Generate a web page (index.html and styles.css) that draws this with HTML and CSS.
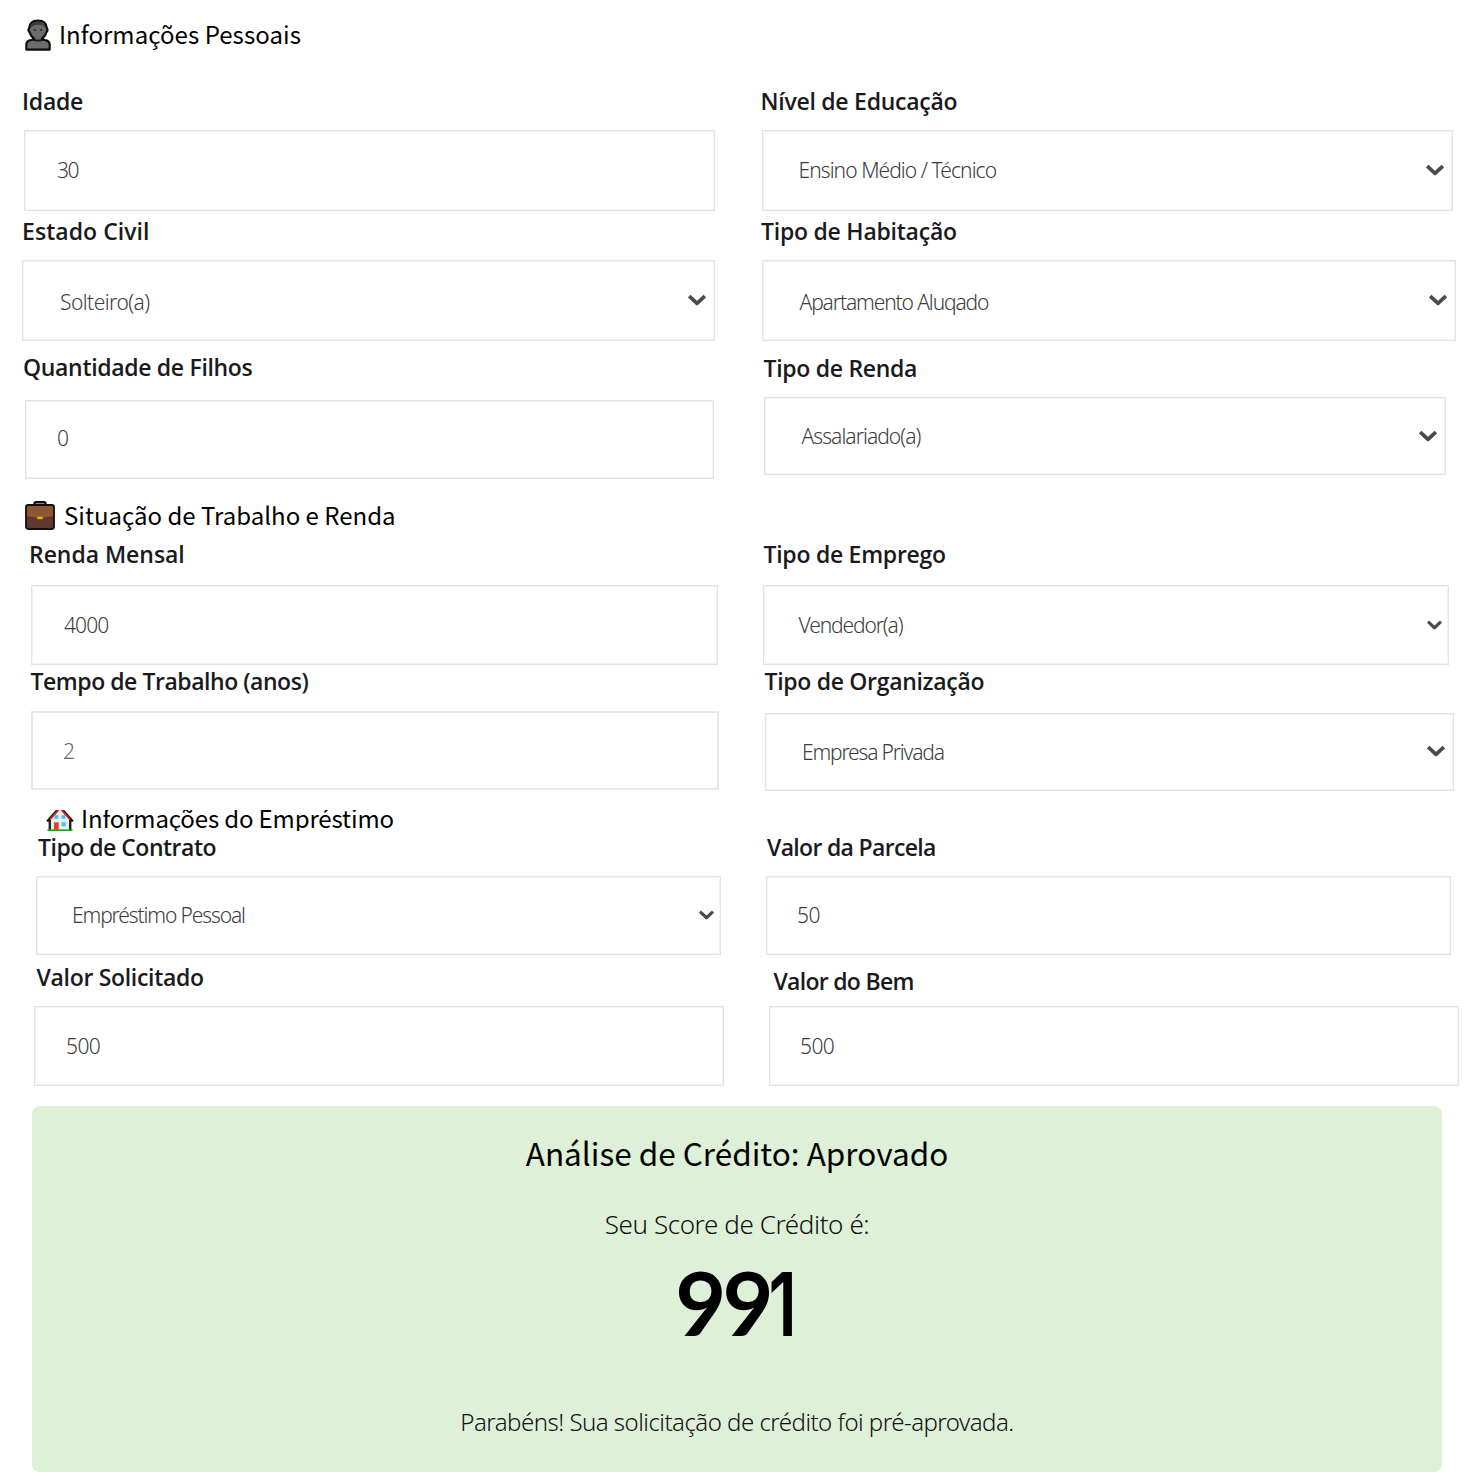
FILE: index.html
```html
<!DOCTYPE html>
<html lang="pt-BR">
<head>
<meta charset="utf-8">
<title>Análise de Crédito</title>
<link rel="stylesheet" href="styles.css">
</head>
<body>
<svg width="0" height="0" class="defs" aria-hidden="true">
  <symbol id="chev" viewBox="0 0 18 12"><path d="M1.200 2 9 9.300l7.800-7.300" fill="none" stroke="#4a4a4a" stroke-width="3.700" stroke-linecap="butt" stroke-linejoin="round"/></symbol>
</svg>
<main class="page">
  <h2 class="heading heading-person">
    <svg class="ico-person" viewBox="0 0 26 32"><path d="M1.300 30.600V26q0-4.500 5-5L9.300 19.800Q5.500 17 4.800 13.500 2.600 11.500 4 9.300 4.700 1.500 13 1.500T22 9.300q1.400 2.200-.8 4.200-.7 3.500-4.500 6.300l3 1.200q5 .5 5 5v4.600z" fill="#6c6c6c" stroke="#0c0c0c" stroke-width="2.100" stroke-linejoin="round"/><path d="M5.300 9.500Q6 2.500 13 2.500t7.700 7L18 6.500Q11 5 8 7z" fill="#3d3d3d"/><path d="M7.500 20.600q5.500 2 11 0" fill="none" stroke="#161616" stroke-width="1.700"/><circle cx="9.800" cy="11" r="1" fill="#222"/><circle cx="16.200" cy="11" r="1" fill="#222"/></svg>
    <span>Informações Pessoais</span>
  </h2>
  <section class="columns personal">
    <div class="col">
      <div class="field age"><label>Idade</label><div class="control"><span>30</span></div></div>
      <div class="field civil"><label>Estado Civil</label><div class="control select"><span>Solteiro(a)</span><svg class="chev"><use href="#chev"/></svg></div></div>
      <div class="field kids"><label>Quantidade de Filhos</label><div class="control"><span>0</span></div></div>
    </div>
    <div class="col">
      <div class="field school"><label>Nível de Educação</label><div class="control select"><span>Ensino Médio / Técnico</span><svg class="chev"><use href="#chev"/></svg></div></div>
      <div class="field housing"><label>Tipo de Habitação</label><div class="control select"><span>Apartamento Aluqado</span><svg class="chev"><use href="#chev"/></svg></div></div>
      <div class="field income-type"><label>Tipo de Renda</label><div class="control select"><span>Assalariado(a)</span><svg class="chev"><use href="#chev"/></svg></div></div>
    </div>
  </section>
  <h2 class="heading heading-work">
    <svg class="ico-case" viewBox="0 0 30 29"><path d="M9.500 5V2.700Q9.500 1.300 11 1.300h8q1.500 0 1.500 1.400V5" fill="none" stroke="#17100e" stroke-width="2.400"/><rect x="1" y="4" width="28" height="24" rx="2.200" fill="#5d392d" stroke="#140d0b" stroke-width="1.800"/><path d="M2 6.500Q2 5 3.500 5h23Q28 5 28 6.500V15q-13 3.500-26 0z" fill="#8c5630"/><rect x="12.300" y="15.600" width="5.400" height="2.600" fill="#e9ad12"/></svg>
    <span>Situação de Trabalho e Renda</span>
  </h2>
  <section class="columns work">
    <div class="col">
      <div class="field income"><label>Renda Mensal</label><div class="control"><span>4000</span></div></div>
      <div class="field tenure"><label>Tempo de Trabalho (anos)</label><div class="control"><span>2</span></div></div>
    </div>
    <div class="col">
      <div class="field job"><label>Tipo de Emprego</label><div class="control select"><span>Vendedor(a)</span><svg class="chev small"><use href="#chev"/></svg></div></div>
      <div class="field org"><label>Tipo de Organização</label><div class="control select"><span>Empresa Privada</span><svg class="chev"><use href="#chev"/></svg></div></div>
    </div>
  </section>
  <h2 class="heading heading-loan">
    <svg class="ico-house" viewBox="0 0 28 21"><path d="M4 9 11 0h6l7 9v11H4z" fill="#e9eef0"/><path d="M1.200 11.500 11.500 0M26.800 11.500 16.500 0" fill="none" stroke="#1a1010" stroke-width="2.600"/><path d="M4 9.500 12.500 0M24 9.500 15.500 0" fill="none" stroke="#e0291c" stroke-width="1.700"/><path d="M3.800 10v10M24.200 10v10" stroke="#222" stroke-width="2.400"/><path d="M8.500 5.300h3.700v3.500H8.500zM15.500 5.300h3.700v3.500h-3.700zM15.500 12.300h4.200v4h-4.200z" fill="#35c8f5"/><path d="M8 12.300h4.700v7.500H8z" fill="#ef3b24"/><path d="M1.500 20.300h25" stroke="#16a51c" stroke-width="1.800"/></svg>
    <span>Informações do Empréstimo</span>
  </h2>
  <section class="columns loan">
    <div class="col">
      <div class="field contract"><label>Tipo de Contrato</label><div class="control select"><span>Empréstimo Pessoal</span><svg class="chev small"><use href="#chev"/></svg></div></div>
      <div class="field amount"><label>Valor Solicitado</label><div class="control"><span>500</span></div></div>
    </div>
    <div class="col">
      <div class="field installment"><label>Valor da Parcela</label><div class="control"><span>50</span></div></div>
      <div class="field asset"><label>Valor do Bem</label><div class="control"><span>500</span></div></div>
    </div>
  </section>
  <section class="result">
    <h1>Análise de Crédito: Aprovado</h1>
    <p class="lead">Seu Score de Crédito é:</p>
    <p class="score">99<span>1</span></p>
    <p class="note">Parabéns! Sua solicitação de crédito foi pré-aprovada.</p>
  </section>
</main>
</body>
</html>
```

FILE: styles.css
```css
* { box-sizing: border-box; }
body { margin: 0; background: #fff; color: #000; font-family: "Open Sans", "Noto Sans", sans-serif; }
h1, h2, p { margin: 0; font-weight: 400; }
.defs { display: block; }
.page { width: 1477px; height: 1480px; overflow: hidden; }

/* Section headings */
.heading { display: flex; align-items: flex-start; font: 400 24px/32px "Noto Sans CJK SC", sans-serif; white-space: nowrap; }
.heading svg { flex: none; }
.heading-person { height: 86px; padding: 18px 0 0 25px; letter-spacing: .06px; }
.ico-person { width: 26px; height: 32px; margin: 1px 8px 0 0; }
.heading-work { height: 39px; padding-left: 25px; }
.ico-case { width: 30px; height: 29px; margin: 1px 9px 0 0; }
.heading-work span { margin-top: -1px; }
.heading-loan { height: 21px; padding-left: 46px; margin-top: 8px; overflow: hidden; letter-spacing: -.14px; }
.ico-house { width: 28px; height: 21px; margin-right: 7px; }
.heading-loan span { margin-top: -8px; }

/* Form columns */
.columns { display: grid; grid-template-columns: 740px 737px; }
.personal { height: 414px; }
.work { height: 263px; }
.loan { height: 256px; margin-top: 1px; }
.field { padding-top: var(--before, 0px); }
.field label { display: block; height: 32px; line-height: 30px; margin-left: var(--lx); font-size: 23px; font-weight: 600; color: #1a1a1c; letter-spacing: var(--ls); white-space: nowrap; }
.control { display: flex; align-items: center; width: var(--w); height: var(--h, 81px); margin: var(--gap, 12px) 0 0 var(--x); padding-left: var(--pad, 30px); border: 1px solid #e2e2e2; box-shadow: inset 0 0 0 1px #f4f4f4; font: 300 21px/30px "Noto Sans", sans-serif; color: #3c3c3c; letter-spacing: var(--vs, 0); white-space: nowrap; }
.control span { margin-top: -1px; }
.select { justify-content: space-between; padding-right: 8px; }
.chev { width: 18px; height: 12px; flex: none; margin-top: -1px; }
.chev.small { width: 15px; height: 10px; margin: 0 -2px 0 0; }

.age { --lx: 22px; --ls: -.22px; --x: 24px; --w: 691px; --pad: 32px; --vs: -1.500px; }
.civil { --before: 5px; --lx: 22px; --ls: .05px; --x: 22px; --w: 693px; --pad: 37px; --vs: -.55px; }
.kids { --before: 11px; --lx: 23px; --ls: -.32px; --x: 25px; --w: 689px; --h: 78.500px; --gap: 16px; --pad: 31px; }
.kids .control span { margin-top: -2px; }
.school { --lx: 20.500px; --ls: -.26px; --x: 21.500px; --w: 691.500px; --pad: 36px; --vs: -.94px; }
.housing { --before: 5px; --lx: 21px; --ls: -.24px; --x: 21.500px; --w: 694px; --pad: 37px; --vs: -1.120px; }
.civil .control span, .housing .control span { margin-top: 1px; padding-top: 1px; }
.income-type { --before: 12px; --lx: 23.500px; --ls: -.3px; --x: 23.500px; --w: 682.500px; --h: 78px; --pad: 37px; --vs: -.95px; }
.income-type .control span, .job .control span, .org .control span { margin-top: 0; }
.income { --lx: 29px; --ls: -.04px; --x: 31px; --w: 687px; --h: 80px; --gap: 14px; --pad: 32px; --vs: -.9px; }
.tenure { --before: 1px; --lx: 30.500px; --ls: -.46px; --x: 31px; --w: 687.500px; --h: 79px; --gap: 13px; --pad: 30px; }
.tenure .control { border: 2px solid #e8e8e8; box-shadow: none; color: #666; }
.tenure .control span { margin-top: 0; }
.job { --lx: 23.500px; --ls: -.27px; --x: 22.500px; --w: 686.500px; --h: 80px; --gap: 14px; --pad: 35px; --vs: -1.120px; }
.org { --before: 1px; --lx: 24.500px; --ls: -.31px; --x: 25px; --w: 688.500px; --h: 78.500px; --gap: 14.500px; --pad: 36px; --vs: -1.180px; }
.contract { --lx: 38px; --ls: -.5px; --x: 36px; --w: 685px; --h: 78.500px; --pad: 35px; --vs: -1.130px; }
.amount { --before: 7.500px; --lx: 36.500px; --ls: -.31px; --x: 33.500px; --w: 690px; --h: 80px; --gap: 12px; --pad: 31.500px; --vs: -.6px; }
.installment { --lx: 27px; --ls: -.68px; --x: 26px; --w: 685px; --h: 78.500px; --pad: 30px; --vs: -.6px; }
.asset { --before: 11px; --lx: 33.500px; --ls: -.71px; --x: 28.500px; --w: 690px; --h: 80px; --gap: 8.500px; --pad: 30.500px; --vs: -.6px; }

/* Result panel */
.result { width: 1410px; height: 366px; margin: 18px 0 0 32px; padding-top: 26px; border-radius: 8px; background: #dff0d8; text-align: center; }
.result h1 { font: 400 31.500px/40px "Noto Sans CJK SC", sans-serif; }
.lead { margin-top: 34px; font: 300 26px/36px "Noto Sans", sans-serif; letter-spacing: -.4px; color: #111; }
.score { height: 100px; margin-top: 9.500px; font: 700 88px/100px Lato, sans-serif; letter-spacing: -4px; }
.score span { display: inline-block; margin-left: -8px; font: 600 88px/0 Inter, sans-serif; letter-spacing: 0; transform: scaleX(.76); transform-origin: 84% 50%; }
.note { margin-top: 52.500px; font: 300 24px/36px "Noto Sans", sans-serif; letter-spacing: -.51px; color: #111; }
```
